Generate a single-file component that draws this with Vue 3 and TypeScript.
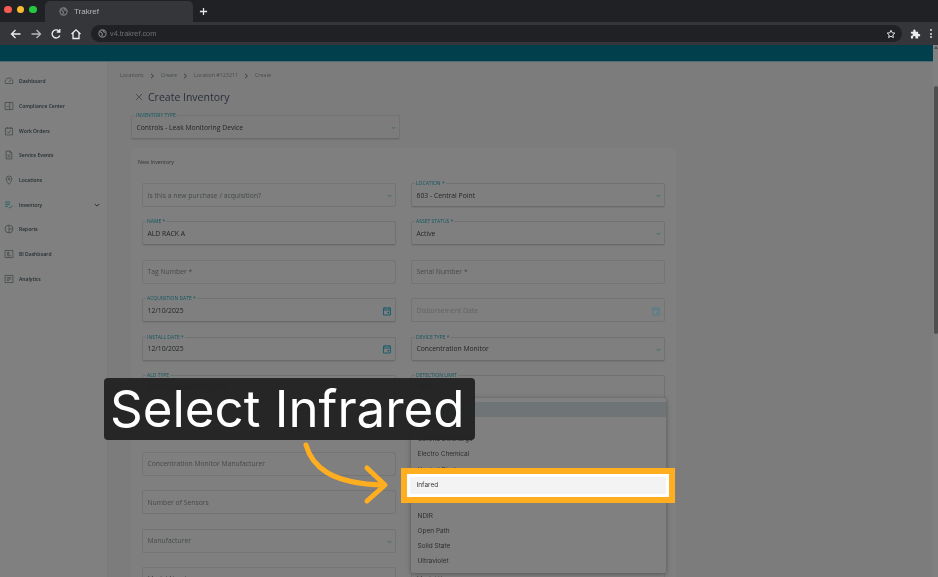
<script setup lang="ts">
interface NavItem {
  label: string;
  icon: string;
  chevron?: boolean;
  active?: boolean;
}

interface Field {
  label: string;
  value?: string;
  floated?: boolean;
  select?: boolean;
  date?: boolean;
  muted?: boolean;
}

const navItems: NavItem[] = [
  { label: 'Dashboard', icon: 'M2 10.500a5.500 5.500 0 1 1 10 0zM7 8.500l2.500-3' },
  { label: 'Compliance Center', icon: 'M1.500 2h11v10h-11zM8 2v10M4 7.500l1 1 1.500-2' },
  { label: 'Work Orders', icon: 'M2 3h10v9.500H2zM5 1.500v2.500M9 1.500v2.500M4.500 8l2 2 3-4' },
  { label: 'Service Events', icon: 'M3 1.500h5.500L11 4v8.500H3zM8.500 1.500V4H11M5 7h4M5 9.500h4' },
  { label: 'Locations', icon: 'M7 13s4-4 4-7.500a4 4 0 0 0-8 0C3 9 7 13 7 13zM7 4.200a1.400 1.400 0 1 0 0 2.800 1.400 1.400 0 0 0 0-2.800z' },
  { label: 'Inventory', icon: 'M1.500 3h7M1.500 6h7M1.500 9h4M7 10l1.500 1.500L12 8', chevron: true, active: true },
  { label: 'Reports', icon: 'M7 1.500a5.500 5.500 0 1 0 0 11 5.500 5.500 0 0 0 0-11zM7 1.500v11M7 7h5.500' },
  { label: 'BI Dashboard', icon: 'M1.500 2h11v10h-11zM4 9.500h6M5 4.500h2v3H5z' },
  { label: 'Analytics', icon: 'M1.500 2h11v10h-11zM4 5h6M4 7h6M4 9h3' }
];

const crumbs = ['Locations', 'Create', 'Location #123211', 'Create'];

const fields: Field[] = [
  { label: 'Is this a new purchase / acquisition?', select: true },
  { label: 'LOCATION *', value: '603 - Central Point', floated: true, select: true },
  { label: 'NAME *', value: 'ALD RACK A', floated: true },
  { label: 'ASSET STATUS *', value: 'Active', floated: true, select: true },
  { label: 'Tag Number *' },
  { label: 'Serial Number *' },
  { label: 'ACQUISITION DATE *', value: '12/10/2025', floated: true, date: true },
  { label: 'Disbursement Date', date: true, muted: true },
  { label: 'INSTALL DATE *', value: '12/10/2025', floated: true, date: true },
  { label: 'DEVICE TYPE *', value: 'Concentration Monitor', floated: true, select: true },
  { label: 'ALD TYPE', value: 'Indirect (parametric) ALD', floated: true, select: true },
  { label: 'DETECTION LIMIT', value: '1000', floated: true },
  { label: '' },
  { label: '' },
  { label: 'Concentration Monitor Manufacturer' },
  { label: '' },
  { label: 'Number of Sensors' },
  { label: '' },
  { label: 'Manufacturer', select: true },
  { label: '' },
  { label: 'Model Number' },
  { label: 'Model Year' }
];

const options = [
  '-- Select --',
  'Analog',
  'Corona Discharge',
  'Electro Chemical',
  'Heated Diode',
  'Infared',
  'Ionized',
  'NDIR',
  'Open Path',
  'Solid State',
  'Ultraviolet'
];
</script>

<template>
  <div class="screen">
    <header class="tabstrip">
      <div class="lights">
        <span class="light red"></span>
        <span class="light yellow"></span>
        <span class="light green"></span>
      </div>
      <div class="tab">
        <svg class="globe" viewBox="0 0 10 10"><circle cx="5" cy="5" r="4" /><path d="M2 3l2 1 1 2-1 2M6 1.500L6 3l2 1" /></svg>
        <span>Trakref</span>
      </div>
      <svg class="plus" viewBox="0 0 10 10"><path d="M5 1v8M1 5h8" /></svg>
    </header>

    <div class="toolbar">
      <svg class="tool" viewBox="0 0 12 12"><path d="M10.500 6h-9M5.500 2l-4 4 4 4" /></svg>
      <svg class="tool dim" viewBox="0 0 12 12"><path d="M1.500 6h9M6.500 2l4 4-4 4" /></svg>
      <svg class="tool" viewBox="0 0 12 12"><path d="M9.800 7.500A4 4 0 1 1 9 3.200M9.800 1v3h-3" /></svg>
      <svg class="tool" viewBox="0 0 12 12"><path d="M1.500 6L6 1.800 10.500 6M3 5v5.500h6V5" /></svg>
      <div class="omnibox">
        <svg class="globe" viewBox="0 0 10 10"><circle cx="5" cy="5" r="4" /><path d="M2 3l2 1 1 2-1 2M6 1.500L6 3l2 1" /></svg>
        <span class="url">v4.trakref.com</span>
        <svg class="star" viewBox="0 0 12 12"><path d="M6 1.500l1.400 3 3.200.4-2.400 2.200.7 3.200L6 8.700l-2.900 1.600.7-3.200L1.400 4.900l3.200-.4z" /></svg>
      </div>
      <svg class="puzzle" viewBox="0 0 12 12"><path d="M1 4h2.500V3a1.300 1.300 0 0 1 2.600 0v1h2.800v2.500h1a1.300 1.300 0 0 1 0 2.600h-1V11.500H6V10a1.300 1.300 0 0 0-2.600 0v1.500H1V8.500h.8a1.300 1.300 0 0 0 0-2.600H1z" /></svg>
      <div class="kebab"><i></i><i></i><i></i></div>
    </div>

    <div class="appbar"></div>

    <div class="body">
      <nav class="sidebar">
        <div v-for="item in navItems" :key="item.label" class="nav-item">
          <svg class="nav-icon" :class="{ active: item.active }" viewBox="0 0 14 14"><path :d="item.icon" /></svg>
          <span class="nav-label">{{ item.label }}</span>
          <svg v-if="item.chevron" class="nav-chevron" viewBox="0 0 8 5"><path d="M1 1l3 3 3-3" /></svg>
        </div>
      </nav>

      <main class="main">
        <div class="crumbs">
          <template v-for="(crumb, i) in crumbs" :key="i">
            <span>{{ crumb }}</span>
            <svg v-if="i < crumbs.length - 1" class="crumb-sep" viewBox="0 0 5 6"><path d="M1 .8L3.500 3 1 5.200" /></svg>
          </template>
        </div>

        <div class="title-row">
          <svg class="close" viewBox="0 0 8 8"><path d="M1 1l6 6M7 1L1 7" /></svg>
          <h1>Create Inventory</h1>
        </div>

        <div class="field type-field floated">
          <label>INVENTORY TYPE</label>
          <span class="value">Controls - Leak Monitoring Device</span>
          <svg class="caret" viewBox="0 0 6 4"><path d="M1 1l2 2 2-2" /></svg>
        </div>

        <section class="card">
          <h2>New Inventory</h2>
          <div class="grid">
            <div
              v-for="(field, i) in fields"
              :key="i"
              class="field"
              :class="{ floated: field.floated }"
            >
              <label v-if="field.floated">{{ field.label }}</label>
              <span v-if="field.floated" class="value">{{ field.value }}</span>
              <span v-else class="placeholder" :class="{ muted: field.muted }">{{ field.label }}</span>
              <svg v-if="field.select" class="caret" viewBox="0 0 6 4"><path d="M1 1l2 2 2-2" /></svg>
              <svg v-if="field.date" class="calendar" :class="{ muted: field.muted }" viewBox="0 0 10 10">
                <path d="M1.500 2h7v7h-7zM1.500 4h7M3 1v1.500M7 1v1.500" />
                <rect x="5.500" y="5.800" width="1.600" height="1.600" />
              </svg>
            </div>
          </div>
        </section>
      </main>

      <aside class="scrollbar">
        <span class="scroll-up"></span>
        <span class="scroll-thumb"></span>
      </aside>
    </div>

    <ul class="dropdown">
      <li
        v-for="(option, i) in options"
        :key="option"
        :class="{ current: i === 0 }"
      >{{ option }}</li>
    </ul>

    <div class="highlight"><div class="highlight-row">Infared</div></div>

    <div class="callout">Select Infrared</div>

    <svg class="arrow" viewBox="0 0 92 66">
      <path d="M6 5C12 26 30 44 84 45M67 28l18 17-18 16" />
    </svg>
  </div>
</template>

<style>
html,
body {
  margin: 0;
  background: #808080;
}
</style>

<style scoped>
.screen {
  position: relative;
  width: 938px;
  height: 577px;
  overflow: hidden;
  display: flex;
  flex-direction: column;
  background: #808080;
  font-family: "Open Sans", sans-serif;
  filter: blur(0.3px);
}

.tabstrip {
  height: 22px;
  flex-shrink: 0;
  display: flex;
  align-items: center;
  background: #202124;
}

.lights {
  width: 45px;
  flex-shrink: 0;
  display: flex;
  gap: 5px;
  padding-left: 4px;
  box-sizing: border-box;
  margin-top: -3px;
}

.light {
  width: 7.500px;
  height: 7.500px;
  border-radius: 50%;
}

.red { background: #f45b52; }
.yellow { background: #f9bb2d; }
.green { background: #27c840; }

.tab {
  width: 148px;
  height: 21px;
  margin-top: 1px;
  display: flex;
  align-items: center;
  gap: 6px;
  padding-left: 14px;
  box-sizing: border-box;
  background: #35363a;
  border-radius: 5px 5px 0 0;
  color: #b4b5b8;
  font: 8px "Liberation Sans", sans-serif;
}

.globe {
  width: 9px;
  height: 9px;
  flex-shrink: 0;
  fill: none;
  stroke: #7c7e82;
  stroke-width: 1.300;
}

.plus {
  width: 9px;
  height: 9px;
  margin-left: 6px;
  fill: none;
  stroke: #e8e8e8;
  stroke-width: 1.400;
}

.toolbar {
  height: 23px;
  flex-shrink: 0;
  display: flex;
  align-items: center;
  padding-left: 10px;
  gap: 8px;
  box-sizing: border-box;
  background: #35363a;
}

.tool {
  width: 12px;
  height: 12px;
  flex-shrink: 0;
  fill: none;
  stroke: #eeeeee;
  stroke-width: 1.300;
}

.tool.dim { stroke: #b8b8b8; }

.omnibox {
  width: 811px;
  height: 17px;
  margin-left: 1px;
  flex-shrink: 0;
  display: flex;
  align-items: center;
  gap: 3px;
  padding: 0 6px 0 7px;
  box-sizing: border-box;
  border-radius: 9px;
  background: #202124;
}

.url {
  flex: 1;
  color: #6f7175;
  font: 7.300px "Liberation Sans", sans-serif;
}

.star {
  width: 10px;
  height: 10px;
  fill: none;
  stroke: #e0e0e0;
  stroke-width: 1.200;
}

.puzzle {
  width: 11px;
  height: 11px;
  flex-shrink: 0;
  fill: #ededed;
}

.kebab {
  display: flex;
  flex-direction: column;
  gap: 1.500px;
  margin-left: 1px;
}

.kebab i {
  width: 2px;
  height: 2px;
  border-radius: 50%;
  background: #dddddd;
}

.appbar {
  height: 17px;
  flex-shrink: 0;
  background: #003f4b;
  border-bottom: 1px solid #4d6d72;
  box-sizing: border-box;
  margin-right: 5px;
}

.body {
  flex: 1;
  min-height: 0;
  display: flex;
}

.sidebar {
  width: 108px;
  flex-shrink: 0;
  padding-top: 7px;
  box-sizing: border-box;
  background: #808080;
  border-right: 1px solid #7a7a7a;
}

.nav-item {
  height: 24.700px;
  display: flex;
  align-items: center;
  padding: 0 7px 0 4px;
  gap: 5px;
}

.nav-icon {
  width: 10px;
  height: 10px;
  flex-shrink: 0;
  fill: none;
  stroke: #3d4347;
  stroke-width: 1;
}

.nav-icon.active { stroke: #0d5663; }

.nav-label {
  flex: 1;
  color: #1f2a2e;
  font-size: 5px;
  font-weight: 600;
  white-space: nowrap;
}

.nav-chevron {
  width: 6px;
  height: 4px;
  fill: none;
  stroke: #1f2a2e;
  stroke-width: 1.200;
}

.main {
  flex: 1;
  min-width: 0;
  padding: 10px 0 0 23px;
  box-sizing: border-box;
  background: #7c7c7c;
}

.crumbs {
  height: 7px;
  margin-left: -11px;
  display: flex;
  align-items: center;
  gap: 6px;
  color: #474c4e;
  font-size: 5.300px;
  line-height: 7px;
}

.crumb-sep {
  width: 5px;
  height: 6px;
  fill: none;
  stroke: #3a3f42;
  stroke-width: 1;
}

.title-row {
  height: 14px;
  margin-top: 11px;
  padding-left: 4px;
  display: flex;
  align-items: center;
  gap: 5px;
}

.close {
  width: 8px;
  height: 8px;
  fill: none;
  stroke: #4b4f55;
  stroke-width: 1;
}

h1 {
  margin: 0;
  color: #292e3a;
  font-size: 10.500px;
  font-weight: 400;
  white-space: nowrap;
}

.field {
  position: relative;
  height: 24px;
  display: flex;
  align-items: center;
  padding: 0 4.500px;
  box-sizing: border-box;
  border: 1px solid #747474;
  border-radius: 2px;
}

.field.floated {
  border-color: #727272;
  border-bottom-color: #6a6a6a;
  box-shadow: 0 1px 1px rgba(0, 0, 0, 0.08);
}

.field label {
  position: absolute;
  top: -4px;
  left: 3px;
  padding: 0 1px;
  background: #7c7c7c;
  color: #12565f;
  font-size: 5px;
  line-height: 6px;
  white-space: nowrap;
}

.value {
  color: #1f2326;
  font-size: 6.800px;
  white-space: nowrap;
}

.placeholder {
  color: #45494b;
  font-size: 6.800px;
  white-space: nowrap;
}

.placeholder.muted { color: #606365; }

.caret {
  position: absolute;
  right: 3px;
  top: 10px;
  width: 5px;
  height: 3.500px;
  fill: none;
  stroke: #285e67;
  stroke-width: 0.900;
}

.calendar {
  position: absolute;
  right: 3px;
  top: 6.500px;
  width: 10px;
  height: 10px;
  fill: none;
  stroke: #0f5d69;
  stroke-width: 0.900;
}

.calendar rect {
  fill: #0f5d69;
  stroke: none;
}

.calendar.muted { stroke: #4f8089; }
.calendar.muted rect { fill: #4f8089; }

.type-field {
  width: 269px;
  margin-top: 11px;
}

.card {
  width: 545px;
  height: 480px;
  margin-top: 9px;
  padding: 11px 11px 0;
  box-sizing: border-box;
  background: #7f7f7f;
  border-radius: 3px;
}

.card h2 {
  margin: 0 0 0 -4px;
  color: #303436;
  font-size: 5.300px;
  font-weight: 400;
  line-height: 7px;
}

.grid {
  margin-top: 17px;
  display: grid;
  grid-template-columns: 254px 254px;
  column-gap: 15px;
  row-gap: 14.400px;
}

.card .field label { background: #7f7f7f; }

.scrollbar {
  position: relative;
  width: 5px;
  flex-shrink: 0;
  background: #808080;
}

.scroll-up {
  position: absolute;
  top: -16px;
  left: 1px;
  border: 2px solid transparent;
  border-top: 0;
  border-bottom: 3px solid #4a4a4a;
}

.scroll-thumb {
  position: absolute;
  top: 24px;
  left: 1px;
  width: 4px;
  height: 248px;
  border-radius: 2px;
  background: #4f4f4f;
}

.dropdown {
  position: absolute;
  left: 411px;
  top: 398px;
  width: 255px;
  height: 175px;
  margin: 0;
  padding: 3.500px 0 0;
  box-sizing: border-box;
  list-style: none;
  background: #808080;
  border-radius: 2px;
  box-shadow: 0 1px 5px rgba(0, 0, 0, 0.35);
  font-family: Inter, sans-serif;
}

.dropdown li {
  height: 15.300px;
  padding-left: 6.500px;
  color: #2b2e30;
  font-size: 6.500px;
  line-height: 15.300px;
}

.dropdown li.current { background: #6f7577; }

.highlight {
  position: absolute;
  left: 401px;
  top: 468px;
  width: 274px;
  height: 35px;
  padding: 3px 0;
  box-sizing: border-box;
  border: 6px solid #ffae1f;
  background: #ffffff;
}

.highlight-row {
  height: 17px;
  margin: 0 3px;
  padding-left: 6.500px;
  background: #f3f3f3;
  color: #3a3a3a;
  font: 6.500px/17px Inter, sans-serif;
}

.callout {
  position: absolute;
  left: 104px;
  top: 378px;
  width: 371px;
  height: 62px;
  padding-left: 6px;
  box-sizing: border-box;
  border-radius: 4px;
  background: rgba(34, 34, 34, 0.96);
  color: #ffffff;
  font: 51px/62px Inter, sans-serif;
  white-space: nowrap;
}

.arrow {
  position: absolute;
  left: 300px;
  top: 440px;
  width: 92px;
  height: 66px;
  fill: none;
  stroke: #ffae1f;
  stroke-width: 5;
  stroke-linecap: round;
  stroke-linejoin: round;
}
</style>
